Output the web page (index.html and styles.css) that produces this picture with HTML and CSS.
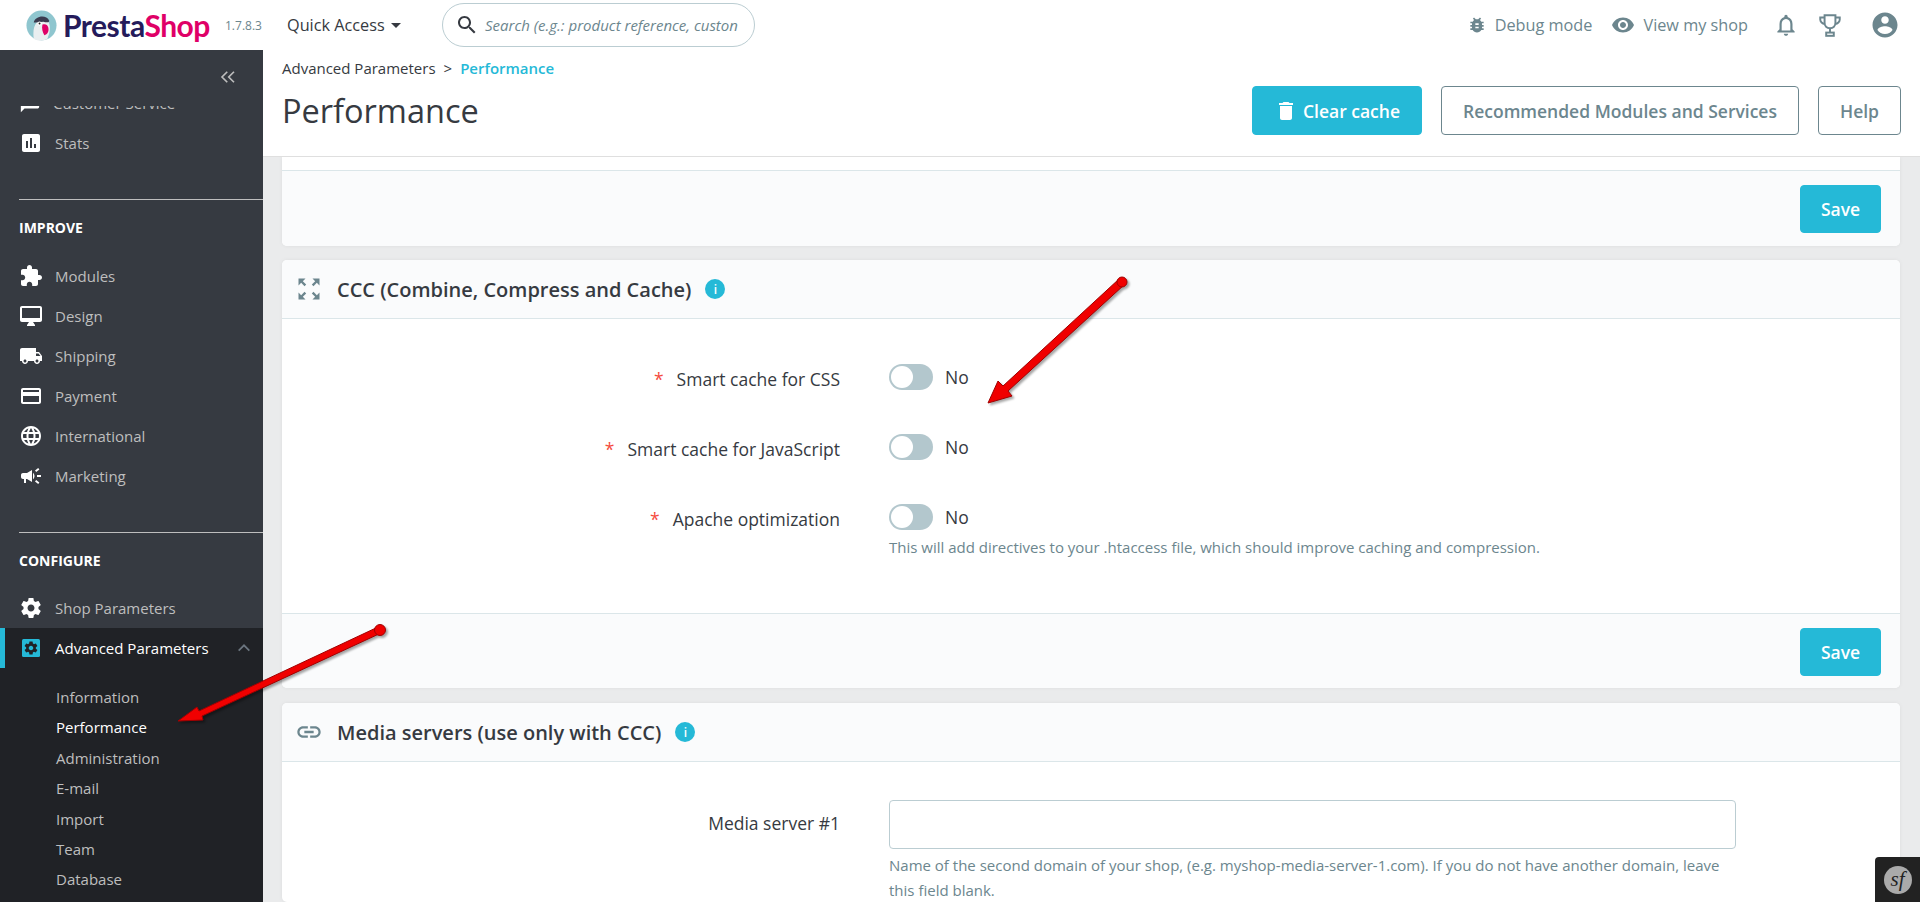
FILE: index.html
```html
<!DOCTYPE html>
<html lang="en">
<head>
  <meta charset="UTF-8">
  <title>Performance • PrestaShop</title>
  <link rel="stylesheet" href="styles.css">
</head>
<body>
  <header class="top-bar">
    <a class="logo">
      <svg class="logo-bird" viewBox="0 0 32 32" width="31" height="31">
        <circle cx="16" cy="16" r="15.5" fill="#8fc6cf"/>
        <path d="M8 30c-1-8 0-13 3-17 2-4 9-5 12-1 2 3 2 8 1 12l-2 6a15 15 0 0 1-14 0z" fill="#e9eef0"/>
        <path d="M8 13c1-7 13-9 16-2 0 2-3 2-6 1-4 0-7 1-10 1z" fill="#3a3b4f"/>
        <circle cx="14" cy="14" r="2.2" fill="#fff"/>
        <circle cx="14" cy="14" r="1" fill="#222"/>
        <path d="M17 15c3-1 5 0 6 3 1 4-1 7-4 8-2-3-3-7-2-11z" fill="#df0067"/>
      </svg>
      <span class="logo-text"><span class="logo-presta">Presta</span><span class="logo-shop">Shop</span></span>
    </a>
    <span class="version">1.7.8.3</span>
    <span class="quick-access">Quick Access<i class="caret"></i></span>
    <div class="search-box">
      <svg class="icon" viewBox="0 0 24 24" width="24" height="24"><path d="M15.5 14h-.79l-.28-.27C15.41 12.59 16 11.11 16 9.5 16 5.91 13.09 3 9.5 3S3 5.91 3 9.5 5.91 16 9.5 16c1.61 0 3.09-.59 4.23-1.57l.27.28v.79l5 4.99L20.49 19l-4.99-5zm-6 0C7.01 14 5 11.99 5 9.5S7.01 5 9.5 5 14 7.01 14 9.5 11.99 14 9.5 14z"/></svg>
      <span class="search-hint">Search (e.g.: product reference, custon</span>
    </div>
    <div class="top-links">
      <span class="top-link">
        <svg class="icon" viewBox="0 0 24 24" width="20" height="20"><path d="M20 8h-2.81c-.45-.78-1.07-1.45-1.82-1.96L17 4.41 15.59 3l-2.17 2.17C12.96 5.06 12.49 5 12 5c-.49 0-.96.06-1.41.17L8.41 3 7 4.41l1.62 1.63C7.88 6.55 7.26 7.22 6.81 8H4v2h2.09c-.05.33-.09.66-.09 1v1H4v2h2v1c0 .34.04.67.09 1H4v2h2.81c1.04 1.79 2.97 3 5.19 3s4.15-1.21 5.19-3H20v-2h-2.09c.05-.33.09-.66.09-1v-1h2v-2h-2v-1c0-.34-.04-.67-.09-1H20V8zm-6 8h-4v-2h4v2zm0-4h-4v-2h4v2z"/></svg>
        Debug mode
      </span>
      <span class="top-link">
        <svg class="icon" viewBox="0 0 24 24" width="24" height="24"><path d="M12 4.5C7 4.5 2.73 7.61 1 12c1.73 4.39 6 7.5 11 7.5s9.27-3.11 11-7.5c-1.73-4.39-6-7.5-11-7.5zM12 17c-2.76 0-5-2.24-5-5s2.24-5 5-5 5 2.24 5 5-2.24 5-5 5zm0-8c-1.66 0-3 1.34-3 3s1.34 3 3 3 3-1.34 3-3-1.34-3-3-3z"/></svg>
        View my shop
      </span>
      <svg class="icon bell" viewBox="0 0 24 24" width="26" height="26"><path d="M12 22c1.1 0 2-.9 2-2h-4c0 1.1.9 2 2 2zm6-6v-5c0-3.07-1.63-5.64-4.5-6.32V4c0-.83-.67-1.5-1.5-1.5s-1.5.67-1.5 1.5v.68C7.64 5.36 6 7.92 6 11v5l-2 2v1h16v-1l-2-2zm-2 1H8v-6c0-2.48 1.51-4.5 4-4.5s4 2.02 4 4.5v6z"/></svg>
      <svg class="trophy" viewBox="0 0 24 24" width="26" height="26" fill="none" stroke="#6c868e" stroke-width="1.8"><path d="M7 3h10v7c0 3-2 5-5 5s-5-2-5-5V3z"/><path d="M7 5H3v2c0 2 2 4 4 4M17 5h4v2c0 2-2 4-4 4"/><path d="M12 15v4"/><rect x="8.5" y="19" width="7" height="3"/></svg>
      <svg class="icon account" viewBox="0 0 24 24" width="30" height="30"><path d="M12 2C6.48 2 2 6.48 2 12s4.48 10 10 10 10-4.48 10-10S17.52 2 12 2zm0 3c1.66 0 3 1.34 3 3s-1.34 3-3 3-3-1.34-3-3 1.34-3 3-3zm0 14.2c-2.5 0-4.71-1.28-6-3.22.03-1.99 4-3.08 6-3.08 1.99 0 5.97 1.09 6 3.08-1.29 1.94-3.5 3.22-6 3.22z"/></svg>
    </div>
  </header>

  <div class="layout">
    <nav class="sidebar">
      <div class="collapse-row">
        <svg viewBox="0 0 24 24" width="18" height="18" fill="none" stroke="#bebebe" stroke-width="2.2"><path d="M11 5l-7 7 7 7M20 5l-7 7 7 7"/></svg>
      </div>
      <div class="nav-scroll">
        <div class="nav-inner">
          <a class="nav-item"><svg viewBox="0 0 24 24" width="22" height="22"><path d="M20 2H4c-1.1 0-2 .9-2 2v18l4-4h14c1.1 0 2-.9 2-2V4c0-1.1-.9-2-2-2z"/></svg>Customer Service</a>
          <a class="nav-item"><svg viewBox="0 0 24 24" width="24" height="24"><path d="M19 3H5c-1.1 0-2 .9-2 2v14c0 1.1.9 2 2 2h14c1.1 0 2-.9 2-2V5c0-1.1-.9-2-2-2zM9 17H7v-7h2v7zm4 0h-2V7h2v10zm4 0h-2v-4h2v4z"/></svg>Stats</a>

          <div class="nav-title">IMPROVE</div>
          <a class="nav-item"><svg viewBox="0 0 24 24" width="24" height="24"><path d="M20.5 11H19V7c0-1.1-.9-2-2-2h-4V3.5C13 2.12 11.88 1 10.5 1S8 2.12 8 3.5V5H4c-1.1 0-1.99.9-1.99 2v3.8H3.5c1.49 0 2.7 1.21 2.7 2.7s-1.21 2.7-2.7 2.7H2V20c0 1.1.9 2 2 2h3.8v-1.5c0-1.49 1.21-2.7 2.7-2.7 1.49 0 2.7 1.21 2.7 2.7V22H17c1.1 0 2-.9 2-2v-4h1.5c1.38 0 2.5-1.12 2.5-2.5S21.88 11 20.5 11z"/></svg>Modules</a>
          <a class="nav-item"><svg viewBox="0 0 24 24" width="24" height="24"><path d="M21 2H3c-1.1 0-2 .9-2 2v12c0 1.1.9 2 2 2h7l-2 3v1h8v-1l-2-3h7c1.1 0 2-.9 2-2V4c0-1.1-.9-2-2-2zm0 12H3V4h18v10z"/></svg>Design</a>
          <a class="nav-item"><svg viewBox="0 0 24 24" width="24" height="24"><path d="M20 8h-3V4H3c-1.1 0-2 .9-2 2v11h2c0 1.66 1.34 3 3 3s3-1.34 3-3h6c0 1.66 1.34 3 3 3s3-1.34 3-3h2v-5l-3-4zM6 18.5c-.83 0-1.5-.67-1.5-1.5s.67-1.5 1.5-1.5 1.5.67 1.5 1.5-.67 1.5-1.5 1.5zm13.5-9l1.96 2.5H17V9.5h2.5zm-1.5 9c-.83 0-1.5-.67-1.5-1.5s.67-1.5 1.5-1.5 1.5.67 1.5 1.5-.67 1.5-1.5 1.5z"/></svg>Shipping</a>
          <a class="nav-item"><svg viewBox="0 0 24 24" width="24" height="24"><path d="M20 4H4c-1.11 0-1.99.89-1.99 2L2 18c0 1.11.89 2 2 2h16c1.11 0 2-.89 2-2V6c0-1.11-.89-2-2-2zm0 14H4v-6h16v6zm0-10H4V6h16v2z"/></svg>Payment</a>
          <a class="nav-item"><svg viewBox="0 0 24 24" width="24" height="24"><path d="M11.99 2C6.47 2 2 6.48 2 12s4.47 10 9.99 10C17.52 22 22 17.52 22 12S17.52 2 11.99 2zm6.93 6h-2.95c-.32-1.25-.78-2.45-1.38-3.56 1.84.63 3.37 1.91 4.33 3.56zM12 4.04c.83 1.2 1.48 2.53 1.91 3.96h-3.82c.43-1.43 1.08-2.76 1.91-3.96zM4.26 14C4.1 13.36 4 12.69 4 12s.1-1.36.26-2h3.38c-.08.66-.14 1.32-.14 2 0 .68.06 1.34.14 2H4.26zm.82 2h2.95c.32 1.25.78 2.45 1.38 3.56-1.84-.63-3.37-1.9-4.33-3.56zm2.95-8H5.08c.96-1.66 2.49-2.93 4.33-3.56C8.81 5.55 8.35 6.75 8.03 8zM12 19.96c-.83-1.2-1.48-2.53-1.91-3.96h3.82c-.43 1.43-1.08 2.76-1.91 3.96zM14.34 14H9.66c-.09-.66-.16-1.32-.16-2 0-.68.07-1.35.16-2h4.68c.09.65.16 1.32.16 2 0 .68-.07 1.34-.16 2zm.25 5.56c.6-1.11 1.06-2.31 1.38-3.56h2.95c-.96 1.65-2.49 2.93-4.33 3.56zM16.36 14c.08-.66.14-1.32.14-2 0-.68-.06-1.34-.14-2h3.38c.16.64.26 1.31.26 2s-.1 1.36-.26 2h-3.38z"/></svg>International</a>
          <a class="nav-item"><svg viewBox="0 0 24 24" width="24" height="24"><path d="M18 11v2h4v-2h-4zm-2 6.61c.96.71 2.21 1.65 3.2 2.39.4-.53.8-1.07 1.2-1.6-.99-.74-2.24-1.68-3.2-2.4-.4.54-.8 1.08-1.2 1.61zM20.4 5.6c-.4-.53-.8-1.07-1.2-1.6-.99.74-2.24 1.68-3.2 2.4.4.53.8 1.07 1.2 1.6.96-.72 2.21-1.65 3.2-2.4zM4 9c-1.1 0-2 .9-2 2v2c0 1.1.9 2 2 2h1v4h2v-4h1l5 3V6L8 9H4zm11.5 3c0-1.33-.58-2.53-1.5-3.35v6.69c.92-.81 1.5-2.01 1.5-3.34z"/></svg>Marketing</a>

          <div class="nav-title">CONFIGURE</div>
          <a class="nav-item"><svg viewBox="0 0 24 24" width="24" height="24"><path d="M19.43 12.98c.04-.32.07-.64.07-.98s-.03-.66-.07-.98l2.11-1.65c.19-.15.24-.42.12-.64l-2-3.46c-.12-.22-.39-.3-.61-.22l-2.49 1c-.52-.4-1.08-.73-1.69-.98l-.38-2.65C14.46 2.18 14.25 2 14 2h-4c-.25 0-.46.18-.49.42l-.38 2.65c-.61.25-1.17.59-1.69.98l-2.49-1c-.23-.09-.49 0-.61.22l-2 3.46c-.13.22-.07.49.12.64l2.11 1.65c-.04.32-.07.65-.07.98s.03.66.07.98l-2.11 1.65c-.19.15-.24.42-.12.64l2 3.46c.12.22.39.3.61.22l2.49-1c.52.4 1.08.73 1.69.98l.38 2.65c.03.24.24.42.49.42h4c.25 0 .46-.18.49-.42l.38-2.65c.61-.25 1.17-.59 1.69-.98l2.49 1c.23.09.49 0 .61-.22l2-3.46c.12-.22.07-.49-.12-.64l-2.11-1.65zM12 15.5c-1.93 0-3.5-1.57-3.5-3.5s1.57-3.5 3.5-3.5 3.5 1.57 3.5 3.5-1.57 3.5-3.5 3.5z"/></svg>Shop Parameters</a>
          <div class="nav-open">
            <a class="nav-item nav-item-active">
              <svg viewBox="0 0 24 24" width="24" height="24"><rect x="3" y="3" width="18" height="18" rx="1.5" fill="#25b9d7"/><path transform="translate(4.2 4.2) scale(.65)" fill="#202226" d="M19.43 12.98c.04-.32.07-.64.07-.98s-.03-.66-.07-.98l2.11-1.65c.19-.15.24-.42.12-.64l-2-3.46c-.12-.22-.39-.3-.61-.22l-2.49 1c-.52-.4-1.08-.73-1.69-.98l-.38-2.65C14.46 2.18 14.25 2 14 2h-4c-.25 0-.46.18-.49.42l-.38 2.65c-.61.25-1.17.59-1.69.98l-2.49-1c-.23-.09-.49 0-.61.22l-2 3.46c-.13.22-.07.49.12.64l2.11 1.65c-.04.32-.07.65-.07.98s.03.66.07.98l-2.11 1.65c-.19.15-.24.42-.12.64l2 3.46c.12.22.39.3.61.22l2.49-1c.52.4 1.08.73 1.69.98l.38 2.65c.03.24.24.42.49.42h4c.25 0 .46-.18.49-.42l.38-2.65c.61-.25 1.17-.59 1.69-.98l2.49 1c.23.09.49 0 .61-.22l2-3.46c.12-.22.07-.49-.12-.64l-2.11-1.65zM12 15.5c-1.93 0-3.5-1.57-3.5-3.5s1.57-3.5 3.5-3.5 3.5 1.57 3.5 3.5-1.57 3.5-3.5 3.5z"/></svg>
              Advanced Parameters
              <svg class="nav-chevron" viewBox="0 0 24 24" width="16" height="16" fill="none" stroke="#6c7680" stroke-width="2.6"><path d="M4 16l8-8 8 8"/></svg>
            </a>
            <ul class="sub-nav">
              <li>Information</li>
              <li class="sub-current">Performance</li>
              <li>Administration</li>
              <li>E-mail</li>
              <li>Import</li>
              <li>Team</li>
              <li>Database</li>
            </ul>
          </div>
        </div>
      </div>
    </nav>

    <main class="main">
      <div class="toolbar">
        <div class="toolbar-left">
          <div class="breadcrumb">Advanced Parameters<span class="crumb-sep">&gt;</span><span class="crumb-current">Performance</span></div>
          <h1 class="page-title">Performance</h1>
        </div>
        <div class="toolbar-btns">
          <button class="btn btn-primary btn-large">
            <svg viewBox="0 0 24 24" width="24" height="24" fill="#fff"><path d="M6 19c0 1.1.9 2 2 2h8c1.1 0 2-.9 2-2V7H6v12zM19 4h-3.5l-1-1h-5l-1 1H5v2h14V4z"/></svg>
            Clear cache
          </button>
          <button class="btn btn-outline btn-large">Recommended Modules and Services</button>
          <button class="btn btn-outline btn-large">Help</button>
        </div>
      </div>

      <div class="content">
        <section class="card card-cut">
          <div class="card-footer"><button class="btn btn-primary">Save</button></div>
        </section>

        <section class="card">
          <div class="card-head">
            <svg class="icon" viewBox="0 0 24 24" width="28" height="28"><path d="M15 3l2.3 2.3-2.89 2.87 1.42 1.42L18.7 6.7 21 9V3zM3 9l2.3-2.3 2.87 2.89 1.42-1.42L6.7 5.3 9 3H3zm6 12l-2.3-2.3 2.89-2.87-1.42-1.42L5.3 17.3 3 15v6zm12-6l-2.3 2.3-2.87-2.89-1.42 1.42 2.89 2.87L15 21h6z"/></svg>
            <h2>CCC (Combine, Compress and Cache)</h2>
            <span class="info">i</span>
          </div>
          <div class="card-body card-body-ccc">
            <div class="form-row">
              <label class="form-label"><span class="req">*</span>Smart cache for CSS</label>
              <div class="form-control"><span class="switch"><i></i></span><span class="switch-text">No</span></div>
            </div>
            <div class="form-row">
              <label class="form-label"><span class="req">*</span>Smart cache for JavaScript</label>
              <div class="form-control"><span class="switch"><i></i></span><span class="switch-text">No</span></div>
            </div>
            <div class="form-row">
              <label class="form-label"><span class="req">*</span>Apache optimization</label>
              <div class="form-control"><span class="switch"><i></i></span><span class="switch-text">No</span></div>
              <p class="form-help">This will add directives to your .htaccess file, which should improve caching and compression.</p>
            </div>
          </div>
          <div class="card-footer"><button class="btn btn-primary">Save</button></div>
        </section>

        <section class="card">
          <div class="card-head">
            <svg class="icon" viewBox="0 0 24 24" width="28" height="28"><path d="M3.9 12c0-1.71 1.39-3.1 3.1-3.1h4V7H7c-2.76 0-5 2.24-5 5s2.24 5 5 5h4v-1.9H7c-1.71 0-3.1-1.39-3.1-3.1zM8 13h8v-2H8v2zm9-6h-4v1.9h4c1.71 0 3.1 1.39 3.1 3.1s-1.39 3.1-3.1 3.1h-4V17h4c2.76 0 5-2.24 5-5s-2.24-5-5-5z"/></svg>
            <h2>Media servers (use only with CCC)</h2>
            <span class="info">i</span>
          </div>
          <div class="card-body card-body-media">
            <div class="form-row">
              <label class="form-label">Media server #1</label>
              <div class="form-control"><input class="text-input" type="text"></div>
              <p class="form-help">Name of the second domain of your shop, (e.g. myshop-media-server-1.com). If you do not have another domain, leave this field blank.</p>
            </div>
          </div>
        </section>
      </div>
    </main>
  </div>

  <!-- red arrows drawn over the screenshot -->
  <svg class="arrows" viewBox="0 0 1920 902" width="1920" height="902">
    <g fill="#f00000" stroke="#a00000" stroke-width="1">
      <polygon points="988,403 998,381 1003,386 1119,279 1124,285 1008,391 1012,396"/>
      <circle cx="1122" cy="282" r="5"/>
      <polygon points="178,721 197,707 199,711 378,627 381,633 202,716 203,720"/>
      <circle cx="380" cy="630" r="5.5"/>
    </g>
  </svg>

  <div class="sf-toolbar"><span class="sf-logo">sf</span></div>
</body>
</html>
```

FILE: styles.css
```css
* {
  box-sizing: border-box;
}
html, body {
  height: 100%;
}
body {
  margin: 0;
  overflow: hidden;
  font-family: "Open Sans", sans-serif;
  font-size: 15px;
  color: #363a41;
  background: #eaebec;
}
.icon {
  fill: #6c868e;
  flex: none;
}

/* top bar */
.top-bar {
  display: flex;
  align-items: center;
  height: 50px;
  padding-left: 26px;
  background: #fff;
}
.logo {
  display: flex;
  align-items: center;
  gap: 6px;
  width: 199px;
}
.logo-text {
  font-family: "Lato", sans-serif;
  font-size: 30px;
  font-weight: 700;
  letter-spacing: -0.5px;
  line-height: 1;
}
.logo-presta {
  color: #251b5b;
}
.logo-shop {
  color: #df0067;
}
.version {
  width: 62px;
  font-size: 12px;
  color: #6c868e;
}
.quick-access {
  display: flex;
  align-items: center;
  width: 155px;
  font-size: 16.25px;
  color: #363a41;
}
.caret {
  margin-left: 6px;
  border-top: 5px solid #363a41;
  border-left: 5px solid transparent;
  border-right: 5px solid transparent;
}
.search-box {
  display: flex;
  align-items: center;
  gap: 6px;
  width: 313px;
  height: 44px;
  padding: 0 12px;
  border: 1px solid #bbcdd2;
  border-radius: 22px;
  overflow: hidden;
}
.search-box .icon {
  fill: #363a41;
}
.search-hint {
  font-size: 15px;
  font-style: italic;
  color: #6c868e;
  white-space: nowrap;
}
.top-links {
  display: flex;
  align-items: center;
  margin-left: auto;
  padding-right: 20px;
  color: #6c868e;
  font-size: 16.25px;
}
.top-link {
  display: flex;
  align-items: center;
  gap: 8px;
  margin-right: 19px;
}
.bell {
  margin-left: 6px;
}
.trophy {
  margin-left: 18px;
}
.account {
  margin-left: 27px;
}

/* sidebar */
.layout {
  display: flex;
  height: 852px;
}
.sidebar {
  display: flex;
  flex-direction: column;
  flex: none;
  width: 263px;
  background: #363a41;
}
.collapse-row {
  display: flex;
  justify-content: flex-end;
  align-items: center;
  height: 56px;
  flex: none;
  padding: 0 26px 3px 0;
}
.nav-scroll {
  flex: 1;
  overflow: hidden;
}
.nav-inner {
  margin-top: -23px;
}
.nav-item {
  display: flex;
  align-items: center;
  gap: 12px;
  height: 40px;
  padding-left: 19px;
  color: #bebebe;
  font-size: 15px;
}
.nav-item svg {
  fill: #fff;
  flex: none;
}
.nav-title {
  margin: 36px 0 0 19px;
  padding-top: 1px;
  border-top: 1px solid #bebebe;
  line-height: 54.5px;
  font-size: 14px;
  font-weight: 700;
  color: #fff;
}
.nav-open {
  background: #202226;
  padding-bottom: 40px;
}
.nav-item-active {
  color: #fff;
  border-left: 5px solid #25b9d7;
  padding-left: 14px;
}
.nav-item-active svg.nav-chevron {
  fill: none;
  margin-left: auto;
  margin-right: 11px;
}
.sub-nav {
  list-style: none;
  margin: 0;
  padding: 14px 0 0 56px;
  color: #bebebe;
  font-size: 15px;
}
.sub-nav li {
  height: 30.4px;
  line-height: 30px;
}
.sub-current {
  color: #fff;
}

/* toolbar */
.main {
  display: flex;
  flex-direction: column;
  flex: 1;
  min-width: 0;
}
.toolbar {
  display: flex;
  justify-content: space-between;
  height: 107px;
  flex: none;
  padding: 0 19px;
  background: #fff;
  border-bottom: 1px solid #dfdfdf;
}
.breadcrumb {
  margin-top: 8px;
  line-height: 20px;
  font-size: 15px;
  color: #363a41;
}
.crumb-sep {
  margin: 0 8px;
}
.crumb-current {
  color: #25b9d7;
  font-weight: 600;
}
.page-title {
  margin: 10px 0 0;
  font-size: 32.5px;
  font-weight: 400;
  line-height: 46px;
  color: #363a41;
}
.toolbar-btns {
  display: flex;
  gap: 19px;
  padding-top: 36px;
}
.btn {
  display: inline-flex;
  align-items: center;
  justify-content: center;
  height: 49px;
  border-radius: 4px;
  font-family: inherit;
  font-size: 17.5px;
  font-weight: 600;
  cursor: pointer;
}
.btn-primary {
  background: #25b9d7;
  border: 1px solid #25b9d7;
  color: #fff;
  width: 81px;
}
.btn-large {
  padding: 0 21px;
  width: auto;
}
.btn-large svg {
  margin-right: 5px;
}
.btn-outline {
  background: #fff;
  border: 1px solid #6c868e;
  color: #6c868e;
}

/* cards */
.content {
  flex: 1;
  overflow: hidden;
  padding: 0 20px 0 19px;
}
.card {
  margin-bottom: 15px;
  background: #fff;
  border-radius: 5px;
  box-shadow: 0 0 4px 0 rgba(0, 0, 0, 0.06);
}
.card-cut {
  padding-top: 13px;
  margin-bottom: 14px;
  border-radius: 0 0 5px 5px;
}
.card-cut .card-footer {
  height: 76px;
}
.card-head {
  display: flex;
  align-items: center;
  height: 59px;
  padding: 0 13px;
  background: #fafbfc;
  border-bottom: 1px solid #dbe6e9;
  border-radius: 5px 5px 0 0;
}
.card-head h2 {
  margin: 0 0 0 14px;
  font-size: 20px;
  font-weight: 600;
  color: #363a41;
}
.info {
  display: flex;
  align-items: center;
  justify-content: center;
  width: 20px;
  height: 20px;
  margin-left: 14px;
  border-radius: 50%;
  background: #25b9d7;
  color: #fff;
  font-size: 12px;
  font-weight: 600;
}
.card-footer {
  display: flex;
  justify-content: flex-end;
  height: 75px;
  padding: 14px 19px 0 0;
  background: #fafbfc;
  border-top: 1px solid #dbe6e9;
  border-radius: 0 0 5px 5px;
}
.card-footer .btn {
  height: 48px;
}
.card-body-ccc {
  height: 294px;
  padding-top: 44px;
}
.card-body-ccc .form-label {
  padding-top: 4px;
}
.card-body-media {
  padding-top: 38px;
}
.card-body-media .form-label {
  padding-bottom: 3px;
}
.form-row {
  display: grid;
  grid-template-columns: 558px 847px;
  column-gap: 49px;
  align-items: center;
  margin-bottom: 42px;
}
.form-label {
  text-align: right;
  font-size: 17.5px;
  color: #363a41;
}
.req {
  margin-right: 13px;
  color: #f54c3e;
}
.form-control {
  display: flex;
  align-items: center;
}
.switch {
  position: relative;
  width: 44px;
  height: 26px;
  border-radius: 13px;
  background: #b3c7cd;
}
.switch i {
  position: absolute;
  left: 2px;
  top: 2px;
  width: 22px;
  height: 22px;
  border-radius: 50%;
  background: #fff;
}
.switch-text {
  margin-left: 12px;
  font-size: 17.5px;
  color: #363a41;
}
.form-help {
  grid-column: 2;
  margin: 4px 0 0;
  font-size: 15px;
  line-height: 24.5px;
  color: #6c868e;
}
.text-input {
  display: block;
  width: 100%;
  height: 49px;
  border: 1px solid #bbcdd2;
  border-radius: 4px;
  background: #fff;
}

/* overlays */
.arrows {
  position: absolute;
  left: 0;
  top: 0;
  pointer-events: none;
  filter: drop-shadow(2px 2px 1px rgba(0, 0, 0, 0.35));
}
.sf-toolbar {
  position: absolute;
  right: 0;
  bottom: 0;
  display: flex;
  align-items: center;
  justify-content: center;
  width: 45px;
  height: 45px;
  background: #222;
  border-radius: 4px 0 0 0;
}
.sf-logo {
  display: flex;
  align-items: center;
  justify-content: center;
  width: 28px;
  height: 28px;
  border-radius: 50%;
  background: #aaa;
  color: #222;
  font-family: "Liberation Serif", serif;
  font-size: 21px;
  font-style: italic;
}
```
